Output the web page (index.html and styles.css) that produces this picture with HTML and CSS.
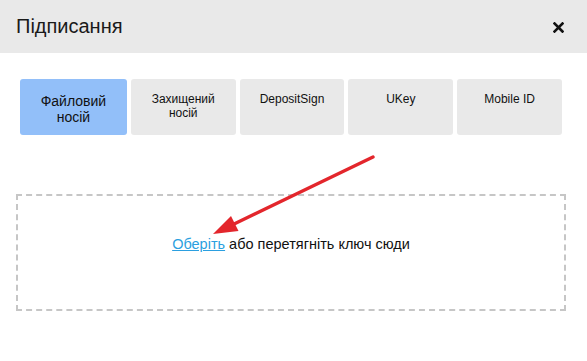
FILE: index.html
```html
<!DOCTYPE html>
<html lang="uk">
<head>
    <meta charset="UTF-8">
    <meta name="viewport" content="width=device-width, initial-scale=1.0">
    <title>Підписання</title>
    <link rel="stylesheet" href="styles.css">
</head>
<body>
    <div class="modal">
        <div class="modal-header">
            <h1>Підписання</h1>
            <button class="close" aria-label="Закрити">
                <svg width="11" height="11" viewBox="0 0 11 11">
                    <path d="M1.5 1.5 L9.5 9.5 M9.5 1.5 L1.5 9.5" stroke="#111" stroke-width="2.6" stroke-linecap="square"/>
                </svg>
            </button>
        </div>

        <div class="modal-body">
            <div class="tabs">
                <div class="tab active">Файловий носій</div>
                <div class="tab">Захищений носій</div>
                <div class="tab">DepositSign</div>
                <div class="tab">UKey</div>
                <div class="tab">Mobile ID</div>
            </div>

            <div class="dropzone">
                <a href="#" class="pick">Оберіть</a> або перетягніть ключ сюди
            </div>
        </div>

        <!-- annotation arrow -->
        <svg class="arrow" width="587" height="361" viewBox="0 0 587 361">
            <line x1="373" y1="157" x2="232" y2="225" stroke="#e3262c" stroke-width="3.4" stroke-linecap="round"/>
            <polygon points="213,234 238.5,231 231,216" fill="#e3262c"/>
        </svg>
    </div>
</body>
</html>
```

FILE: styles.css
```css
* {
    margin: 0;
    padding: 0;
    box-sizing: border-box;
}

body {
    font-family: "Liberation Sans", Arial, sans-serif;
    color: #111;
    background: #fff;
}

.modal {
    position: relative;
    width: 587px;
    height: 361px;
    background: #fff;
}

.modal-header {
    height: 53px;
    background: #e9e9e9;
    display: flex;
    align-items: center;
    justify-content: space-between;
    padding: 0 23px 0 16px;
}

.modal-header h1 {
    font-size: 20px;
    font-weight: normal;
    color: #1a1a1a;
}

.close {
    background: none;
    border: none;
    display: flex;
    padding: 0;
    margin-top: 2px;
}

.modal-body {
    padding: 26px 25px 0 16px;
}

.tabs {
    display: flex;
    gap: 4px;
    padding-left: 4px;
}

.tab {
    flex: 1;
    height: 56px;
    background: #e9e9e9;
    border-radius: 3px;
    text-align: center;
    font-size: 12px;
    line-height: 14px;
    padding: 13px 18px 0;
    color: #111;
}

.tab.active {
    flex: 1.03;
    background: #92bff9;
    font-size: 14px;
    line-height: 16px;
    padding-top: 14px;
}

.dropzone {
    margin-top: 59px;
    width: 550px;
    height: 117px;
    border: 2px dashed #c6c6c6;
    text-align: center;
    font-size: 14.5px;
    padding-top: 40px;
    color: #111;
}

.pick {
    color: #2b9fe0;
    text-decoration: underline;
}

.arrow {
    position: absolute;
    left: 0;
    top: 0;
    pointer-events: none;
}
```
